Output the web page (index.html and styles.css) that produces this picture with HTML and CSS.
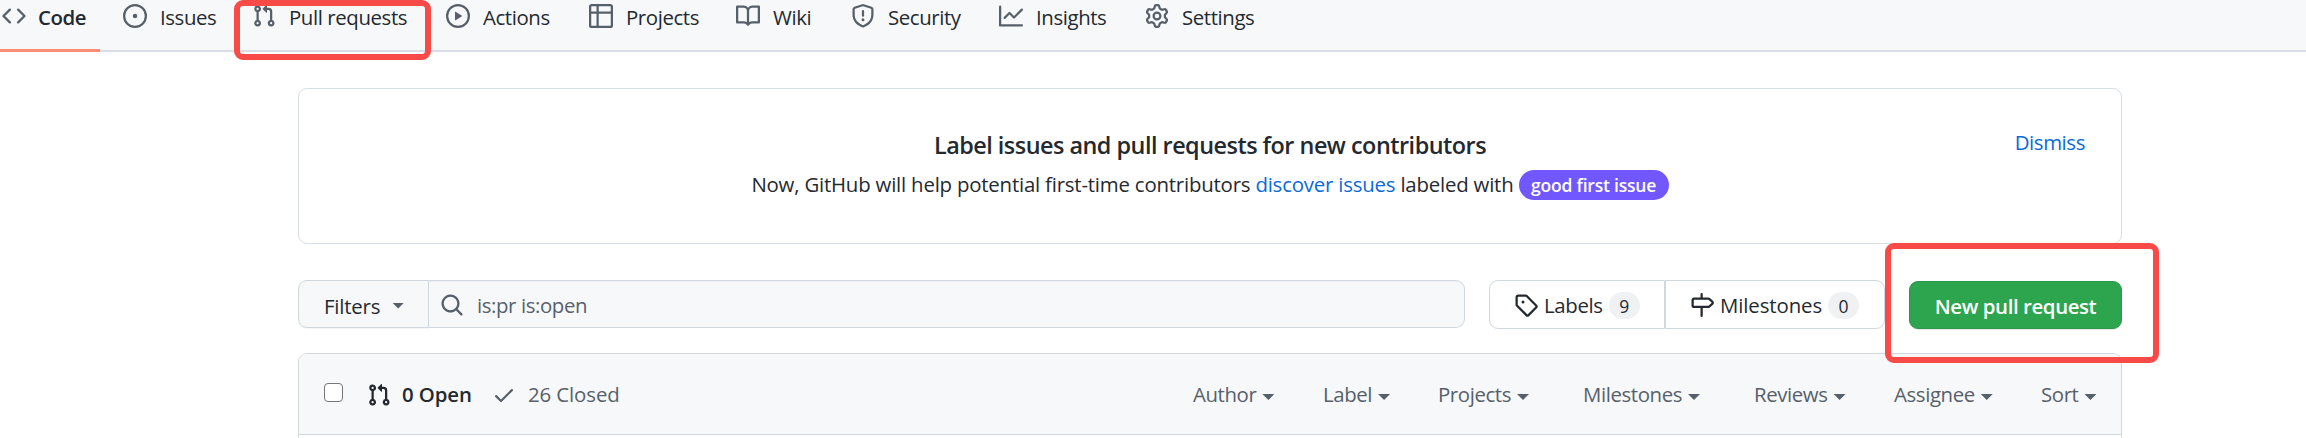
FILE: index.html
```html
<!DOCTYPE html>
<html lang="en">
<head>
<meta charset="utf-8">
<title>Pull requests</title>
<link rel="stylesheet" href="styles.css">
</head>
<body>
<svg class="defs" aria-hidden="true">
  <symbol id="pr" viewBox="0 0 16 16"><path fill-rule="evenodd" d="M7.177 3.073L9.573.677A.25.25 0 0110 .854v4.792a.25.25 0 01-.427.177L7.177 3.427a.25.25 0 010-.354zM3.75 2.5a.75.75 0 100 1.5.75.75 0 000-1.5zm-2.25.75a2.25 2.25 0 113 2.122v5.256a2.251 2.251 0 11-1.5 0V5.372A2.25 2.25 0 011.5 3.25zM11 2.5h-1V4h1a1 1 0 011 1v5.628a2.251 2.251 0 101.5 0V5A2.5 2.5 0 0011 2.5zm1 10.25a.75.75 0 111.5 0 .75.75 0 01-1.5 0zM3.75 12a.75.75 0 100 1.5.75.75 0 000-1.5z"/></symbol>
</svg>
<header class="nav">
  <a class="tab tab-code"><svg class="icon" viewBox="0 0 16 16"><path fill-rule="evenodd" d="M4.72 3.22a.75.75 0 011.06 1.06L2.06 8l3.72 3.72a.75.75 0 11-1.06 1.06L.47 8.53a.75.75 0 010-1.06l4.25-4.25zm6.56 0a.75.75 0 10-1.06 1.06L13.94 8l-3.72 3.72a.75.75 0 101.06 1.06l4.25-4.25a.75.75 0 000-1.06l-4.25-4.25z"/></svg><span>Code</span></a>
  <a class="tab tab-issues"><svg class="icon" viewBox="0 0 16 16"><path d="M8 9.5a1.5 1.5 0 100-3 1.5 1.5 0 000 3z"/><path fill-rule="evenodd" d="M8 0a8 8 0 100 16A8 8 0 008 0zM1.5 8a6.5 6.5 0 1113 0 6.5 6.5 0 01-13 0z"/></svg><span>Issues</span></a>
  <a class="tab tab-pulls"><svg class="icon"><use href="#pr"/></svg><span>Pull requests</span></a>
  <a class="tab tab-actions"><svg class="icon" viewBox="0 0 16 16"><path fill-rule="evenodd" d="M1.5 8a6.5 6.5 0 1113 0 6.5 6.5 0 01-13 0zM8 0a8 8 0 100 16A8 8 0 008 0zM6.379 5.227A.25.25 0 006 5.442v5.117a.25.25 0 00.379.214l4.264-2.559a.25.25 0 000-.428L6.379 5.227z"/></svg><span>Actions</span></a>
  <a class="tab tab-projects"><svg class="icon" viewBox="0 0 16 16"><path fill-rule="evenodd" d="M0 1.75C0 .784.784 0 1.75 0h12.5C15.216 0 16 .784 16 1.75v12.5A1.75 1.75 0 0114.25 16H1.75A1.75 1.75 0 010 14.25V1.75zM1.5 6.5v7.75c0 .138.112.25.25.25H5v-8H1.5zM5 5H1.5V1.75a.25.25 0 01.25-.25H5V5zm1.5 1.5v8h7.75a.25.25 0 00.25-.25V6.5h-8zm8-1.5h-8V1.5h7.75a.25.25 0 01.25.25V5z"/></svg><span>Projects</span></a>
  <a class="tab tab-wiki"><svg class="icon" viewBox="0 0 16 16"><path fill-rule="evenodd" d="M0 1.75A.75.75 0 01.75 1h4.253c1.227 0 2.317.59 3 1.501A3.744 3.744 0 0111.006 1h4.245a.75.75 0 01.75.75v10.5a.75.75 0 01-.75.75h-4.507a2.25 2.25 0 00-1.591.659l-.622.621a.75.75 0 01-1.06 0l-.622-.621A2.25 2.25 0 005.258 13H.75a.75.75 0 01-.75-.75V1.75zm8.755 3a2.25 2.25 0 012.25-2.25H14.5v9h-3.757c-.71 0-1.4.201-1.992.572l.004-7.322zm-1.504 7.324l.004-5.073-.002-2.253A2.25 2.25 0 005.003 2.5H1.5v9h3.757a3.75 3.75 0 011.994.574z"/></svg><span>Wiki</span></a>
  <a class="tab tab-security"><svg class="icon" viewBox="0 0 16 16"><path fill-rule="evenodd" d="M7.467.133a1.75 1.75 0 011.066 0l5.25 1.68A1.75 1.75 0 0115 3.48V7c0 1.566-.32 3.182-1.303 4.682-.983 1.498-2.585 2.813-5.032 3.855a1.7 1.7 0 01-1.33 0c-2.447-1.042-4.049-2.357-5.032-3.855C1.32 10.182 1 8.566 1 7V3.48a1.75 1.75 0 011.217-1.667l5.25-1.68zm.61 1.429a.25.25 0 00-.153 0l-5.25 1.68a.25.25 0 00-.174.238V7c0 1.358.275 2.666 1.057 3.86.784 1.194 2.121 2.34 4.366 3.297a.2.2 0 00.154 0c2.245-.956 3.582-2.104 4.366-3.298C13.225 9.666 13.5 8.36 13.5 7V3.48a.25.25 0 00-.174-.237l-5.25-1.68zM8.75 4.75a.75.75 0 00-1.5 0v3a.75.75 0 001.5 0v-3zM9 10.5a1 1 0 11-2 0 1 1 0 012 0z"/></svg><span>Security</span></a>
  <a class="tab tab-insights"><svg class="icon" viewBox="0 0 16 16"><path fill-rule="evenodd" d="M1.5 1.75a.75.75 0 00-1.5 0v12.5c0 .414.336.75.75.75h14.5a.75.75 0 000-1.5H1.5V1.75zm14.28 2.53a.75.75 0 00-1.06-1.06L10 7.94 7.53 5.47a.75.75 0 00-1.06 0L3.22 8.72a.75.75 0 001.06 1.06L7 7.06l2.47 2.47a.75.75 0 001.06 0l5.25-5.25z"/></svg><span>Insights</span></a>
  <a class="tab tab-settings"><svg class="icon" viewBox="0 0 16 16"><path fill-rule="evenodd" d="M7.429 1.525a6.593 6.593 0 011.142 0c.036.003.108.036.137.146l.289 1.105c.147.56.55.967.997 1.189.174.086.341.183.501.29.417.278.97.423 1.53.27l1.102-.303c.11-.03.175.016.195.046.219.31.41.641.573.989.014.031.022.11-.059.19l-.815.806c-.411.406-.562.957-.53 1.456a4.588 4.588 0 010 .582c-.032.499.119 1.05.53 1.456l.815.806c.08.08.073.159.059.19a6.494 6.494 0 01-.573.99c-.02.029-.086.074-.195.045l-1.103-.303c-.559-.153-1.112-.008-1.529.27-.16.107-.327.204-.5.29-.449.222-.851.628-.998 1.189l-.289 1.105c-.029.11-.101.143-.137.146a6.613 6.613 0 01-1.142 0c-.036-.003-.108-.037-.137-.146l-.289-1.105c-.147-.56-.55-.967-.997-1.189a4.502 4.502 0 01-.501-.29c-.417-.278-.97-.423-1.53-.27l-1.102.303c-.11.03-.175-.016-.195-.046a6.492 6.492 0 01-.573-.989c-.014-.031-.022-.11.059-.19l.815-.806c.411-.406.562-.957.53-1.456a4.587 4.587 0 010-.582c.032-.499-.119-1.05-.53-1.456l-.815-.806c-.08-.08-.073-.159-.059-.19a6.44 6.44 0 01.573-.99c.02-.029.086-.075.195-.045l1.103.303c.559.153 1.112.008 1.529-.27.16-.107.327-.204.5-.29.449-.222.851-.628.998-1.189l.289-1.105c.029-.11.101-.143.137-.146zM8 0c-.236 0-.47.01-.701.03-.743.065-1.29.615-1.458 1.261l-.29 1.106c-.017.066-.078.158-.211.224a5.994 5.994 0 00-.668.386c-.123.082-.233.09-.3.071L3.27 2.776c-.644-.177-1.392.02-1.82.63a7.977 7.977 0 00-.704 1.217c-.315.675-.111 1.422.363 1.891l.815.806c.05.048.098.147.088.294a6.084 6.084 0 000 .772c.01.147-.038.246-.088.294l-.815.806c-.474.469-.678 1.216-.363 1.891.2.428.436.835.704 1.218.428.609 1.176.806 1.82.63l1.103-.303c.066-.019.176-.011.299.071.213.143.436.272.668.386.133.066.194.158.212.224l.289 1.106c.169.646.715 1.196 1.458 1.26a8.094 8.094 0 001.402 0c.743-.064 1.29-.614 1.458-1.26l.29-1.106c.017-.066.078-.158.211-.224a5.98 5.98 0 00.668-.386c.123-.082.233-.09.3-.071l1.102.302c.644.177 1.392-.02 1.82-.63.268-.382.505-.789.704-1.217.315-.675.111-1.422-.364-1.891l-.814-.806c-.05-.048-.098-.147-.088-.294a6.1 6.1 0 000-.772c-.01-.147.039-.246.088-.294l.814-.806c.475-.469.679-1.216.364-1.891a7.992 7.992 0 00-.704-1.218c-.428-.609-1.176-.806-1.82-.63l-1.103.303c-.066.019-.176.011-.299-.071a5.991 5.991 0 00-.668-.386c-.133-.066-.194-.158-.212-.224L10.16 1.29C9.99.645 9.444.095 8.701.031A8.094 8.094 0 008 0zm1.5 8a1.5 1.5 0 11-3 0 1.5 1.5 0 013 0zM11 8a3 3 0 11-6 0 3 3 0 016 0z"/></svg><span>Settings</span></a>
</header>
<main class="content">
  <section class="notice">
    <div class="notice-body">
      <h2 class="notice-title">Label issues and pull requests for new contributors</h2>
      <p class="notice-text">Now, GitHub will help potential first-time contributors <a class="link">discover issues</a> labeled with <span class="pill">good first issue</span></p>
    </div>
    <a class="link dismiss">Dismiss</a>
  </section>
  <div class="toolbar">
    <div class="search">
      <button class="filters"><span>Filters</span><i class="caret"></i></button>
      <div class="query"><svg class="icon" viewBox="0 0 16 16"><path fill-rule="evenodd" d="M11.5 7a4.499 4.499 0 11-8.998 0A4.499 4.499 0 0111.5 7zm-.82 4.74a6 6 0 111.06-1.06l3.04 3.04a.75.75 0 11-1.06 1.06l-3.04-3.04z"/></svg><span>is:pr is:open</span></div>
    </div>
    <div class="subnav">
      <a class="subnav-item labels"><svg class="icon" viewBox="0 0 16 16"><path fill-rule="evenodd" d="M2.5 7.775V2.75a.25.25 0 01.25-.25h5.025a.25.25 0 01.177.073l6.25 6.25a.25.25 0 010 .354l-5.025 5.025a.25.25 0 01-.354 0l-6.25-6.25a.25.25 0 01-.073-.177zm-1.5 0V2.75C1 1.784 1.784 1 2.75 1h5.025c.464 0 .91.184 1.238.513l6.25 6.25a1.75 1.75 0 010 2.474l-5.026 5.026a1.75 1.75 0 01-2.474 0l-6.25-6.25A1.75 1.75 0 011 7.775zM6 5a1 1 0 100 2 1 1 0 000-2z"/></svg><span class="name">Labels</span><span class="counter">9</span></a>
      <a class="subnav-item milestones"><svg class="icon" viewBox="0 0 16 16"><path fill-rule="evenodd" d="M7.75 0a.75.75 0 01.75.75V3h3.634c.414 0 .814.147 1.13.414l2.07 1.75a1.75 1.75 0 010 2.672l-2.07 1.75a1.75 1.75 0 01-1.13.414H8.5v5.25a.75.75 0 11-1.5 0V10H2.75A1.75 1.75 0 011 8.25v-3.5C1 3.784 1.784 3 2.75 3H7V.75A.75.75 0 017.75 0zm0 8.5h4.384a.25.25 0 00.161-.06l2.07-1.75a.25.25 0 000-.38l-2.07-1.75a.25.25 0 00-.161-.06H2.75a.25.25 0 00-.25.25v3.5c0 .138.112.25.25.25h5z"/></svg><span class="name">Milestones</span><span class="counter">0</span></a>
    </div>
    <button class="new-pr">New pull request</button>
  </div>
  <section class="list">
    <div class="list-head">
      <span class="checkbox"></span>
      <a class="state open"><svg class="icon"><use href="#pr"/></svg><span>0 Open</span></a>
      <a class="state closed"><svg class="icon" viewBox="0 0 16 16"><path fill-rule="evenodd" d="M13.78 4.22a.75.75 0 010 1.06l-7.25 7.25a.75.75 0 01-1.06 0L2.22 9.28a.75.75 0 011.06-1.06L6 10.94l6.72-6.72a.75.75 0 011.06 0z"/></svg><span>26 Closed</span></a>
      <nav class="menus">
        <a class="menu m-author"><span>Author</span><i class="caret"></i></a>
        <a class="menu m-label"><span>Label</span><i class="caret"></i></a>
        <a class="menu m-projects"><span>Projects</span><i class="caret"></i></a>
        <a class="menu m-milestones"><span>Milestones</span><i class="caret"></i></a>
        <a class="menu m-reviews"><span>Reviews</span><i class="caret"></i></a>
        <a class="menu m-assignee"><span>Assignee</span><i class="caret"></i></a>
        <a class="menu m-sort"><span>Sort</span><i class="caret"></i></a>
      </nav>
    </div>
  </section>
</main>
<div class="highlight highlight-tab"></div>
<div class="highlight highlight-button"></div>
</body>
</html>
```
FILE: styles.css
```css
* { box-sizing: border-box; }
body {
  margin: 0;
  height: 438px;
  overflow: hidden;
  position: relative;
  background: #fff;
  color: #24292f;
  font: 400 20.4px/30px "Open Sans", "Noto Sans", sans-serif;
  letter-spacing: -0.4px;
  white-space: nowrap;
}
.defs { position: absolute; width: 0; height: 0; }
.icon { width: 24px; height: 24px; flex: none; fill: currentColor; }

.nav {
  display: flex;
  height: 52px;
  background: #f6f8fa;
  border-bottom: 2px solid #d8dee4;
}
.tab { display: flex; gap: 13px; flex: none; padding-top: 2px; }
.tab .icon { margin-top: 2px; color: #57606a; }
.tab-code {
  width: 123px;
  height: 52px;
  padding-left: 2px;
  gap: 12px;
  font-weight: 600;
  background: linear-gradient(#fd8c73, #fd8c73) 0 100% / 100px 3px no-repeat;
}
.tab-issues { width: 129px; }
.tab-pulls { width: 194px; }
.tab-actions { width: 143px; }
.tab-projects { width: 147px; }
.tab-wiki { width: 115px; }
.tab-security { width: 148px; }
.tab-insights { width: 146px; }

.content { width: 1824px; margin: 36px 0 0 298px; }
.notice {
  display: flex;
  position: relative;
  justify-content: center;
  height: 156px;
  border: 1px solid #d8dee4;
  border-radius: 9px;
}
.notice-body { padding-top: 38px; text-align: center; }
.notice-title { margin: 0; font-size: 23.4px; line-height: 36px; font-weight: 600; letter-spacing: -0.5px; }
.notice-text { margin: 6px 0 0; line-height: 30px; letter-spacing: -0.2px; }
.link { color: #0969da; }
.pill {
  display: inline-block;
  width: 150px;
  height: 30px;
  border-radius: 15px;
  background: #7057ff;
  color: #fff;
  font-size: 17.5px;
  line-height: 30px;
  font-weight: 600;
}
.dismiss { position: absolute; right: 36px; top: 38px; }

.toolbar { display: flex; margin-top: 36px; height: 49px; }
.search { display: flex; width: 1167px; height: 48px; }
.filters {
  display: flex;
  align-items: center;
  gap: 12px;
  width: 131px;
  padding: 3px 0 0 25px;
  border: 1px solid #d0d7de;
  border-radius: 9px 0 0 9px;
  background: #f6f8fa;
  color: inherit;
  font: inherit;
  font-weight: 500;
  letter-spacing: -0.2px;
  box-shadow: 0 1px 0 rgba(27, 31, 36, 0.04);
}
.caret { width: 12px; height: 6px; flex: none; background: #57606a; clip-path: polygon(0 0, 100% 0, 50% 100%); }
.query {
  display: flex;
  flex: 1;
  gap: 13px;
  padding: 9px 0 0 11px;
  border: 1px solid #d0d7de;
  border-left: 0;
  border-radius: 0 9px 9px 0;
  background: #f6f8fa;
  color: #57606a;
  box-shadow: inset 0 1px 0 rgba(208, 215, 222, 0.2);
}
.query .icon { margin-top: 3px; }
.subnav { display: flex; margin-left: 24px; width: 396px; }
.subnav-item { display: flex; border: 1px solid #d0d7de; padding: 9px 0 0 24px; font-weight: 500; letter-spacing: -0.35px; }
.subnav-item .icon { margin-top: 3px; margin-right: 6px; }
.labels { width: 176px; border-radius: 9px 0 0 9px; }
.milestones { flex: 1; border-radius: 0 9px 9px 0; letter-spacing: -0.1px; }
.counter {
  width: 31px;
  height: 27px;
  margin: 2px 0 0 6px;
  border-radius: 14px;
  background: #eff1f3;
  font-size: 17.5px;
  line-height: 28px;
  text-align: center;
}
.new-pr {
  width: 213px;
  height: 48px;
  margin: 1px 0 0 auto;
  padding: 2px 0 0;
  border: 1px solid #2c974b;
  border-radius: 9px;
  background: #2da44e;
  color: #fff;
  font: inherit;
  font-weight: 600;
  letter-spacing: inherit;
  box-shadow: 0 1px 0 rgba(27, 31, 36, 0.1);
}

.list { margin-top: 24px; height: 85px; border: 1px solid #d0d7de; border-bottom: 0; border-radius: 9px 9px 0 0; }
.list-head {
  display: flex;
  height: 81px;
  padding: 25px 0 0 25px;
  background: #f6f8fa;
  border-bottom: 1px solid #d0d7de;
  border-radius: 8px 8px 0 0;
}
.checkbox { width: 19px; height: 19px; margin-top: 4px; border: 1px solid #767676; border-radius: 4px; background: #fff; }
.state { display: flex; letter-spacing: -0.1px; }
.state .icon { margin: 4px 11px 0 0; }
.open { margin-left: 24px; width: 125px; font-weight: 600; }
.closed .icon { margin-right: 12px; }
.closed { color: #57606a; }
.menus { display: flex; margin-left: auto; color: #57606a; }
.menu { display: flex; flex: none; }
.menu .caret { margin: 15px 0 0 6px; }
.m-author { width: 130px; }
.m-label { width: 115px; }
.m-projects { width: 145px; }
.m-milestones { width: 171px; }
.m-reviews { width: 140px; }
.m-assignee { width: 147px; }
.m-sort { width: 80px; }

.highlight { position: absolute; border: 6px solid #f84b48; border-radius: 9px; }
.highlight-tab { left: 234px; top: 0; width: 197px; height: 60px; }
.highlight-button { left: 1885px; top: 243px; width: 274px; height: 120px; }
```
